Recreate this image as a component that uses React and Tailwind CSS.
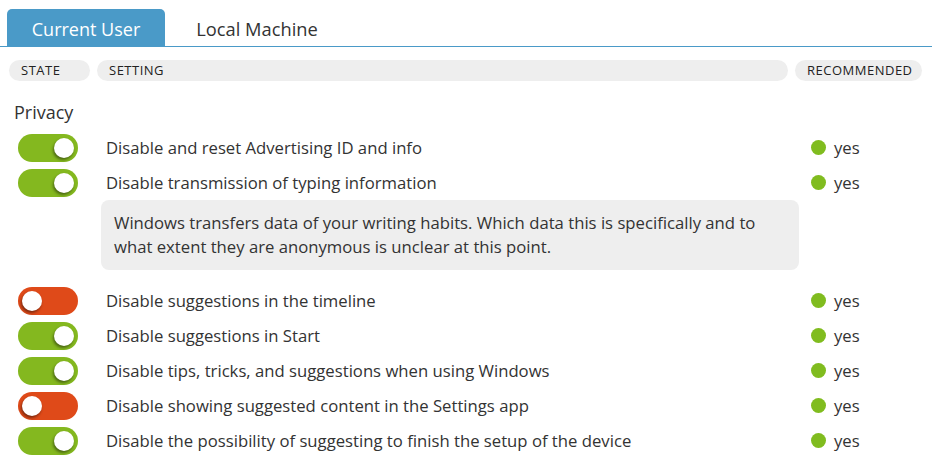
import { useState } from "react"

const font = { fontFamily: '"Open Sans", "Noto Sans", sans-serif' }

const settings = [
  { label: "Disable and reset Advertising ID and info", on: true },
  {
    label: "Disable transmission of typing information",
    on: true,
    info: "Windows transfers data of your writing habits. Which data this is specifically and to what extent they are anonymous is unclear at this point.",
  },
  { label: "Disable suggestions in the timeline", on: false },
  { label: "Disable suggestions in Start", on: true },
  { label: "Disable tips, tricks, and suggestions when using Windows", on: true },
  { label: "Disable showing suggested content in the Settings app", on: false },
  { label: "Disable the possibility of suggesting to finish the setup of the device", on: true },
]

function Toggle({ on, onClick }) {
  return (
    <button
      onClick={onClick}
      className={
        "w-[60px] h-[28px] rounded-full flex items-center px-[4px] " +
        (on ? "bg-[#84b81f] justify-end" : "bg-[#df4a19] justify-start")
      }
    >
      <span className="w-[20px] h-[20px] rounded-full bg-white shadow-[-1px_2px_3px_rgba(0,0,0,0.45)]" />
    </button>
  )
}

export default function App() {
  const [tab, setTab] = useState(0)
  const [states, setStates] = useState(settings.map((s) => s.on))

  const flip = (i) => {
    const next = [...states]
    next[i] = !next[i]
    setStates(next)
  }

  return (
    <div className="w-[932px] h-[457px] bg-white text-[#333] overflow-hidden" style={font}>
      {/* Tabs */}
      <div className="flex pt-[9px] pl-[7px] border-b border-[#4a9ac8]">
        <button
          onClick={() => setTab(0)}
          className={
            "w-[158px] h-[37px] pt-[3px] rounded-t-[5px] text-[18px] " +
            (tab === 0 ? "bg-[#4a9ac8] text-white" : "text-[#333]")
          }
        >
          Current User
        </button>
        <button
          onClick={() => setTab(1)}
          className={
            "w-[184px] h-[37px] pt-[3px] rounded-t-[5px] text-[18.3px] " +
            (tab === 1 ? "bg-[#4a9ac8] text-white" : "text-[#333]")
          }
        >
          Local Machine
        </button>
      </div>

      {/* Column headers */}
      <div className="flex gap-[7px] mt-[13px] pl-[9px] pr-[10px] text-[13px] tracking-[0.5px] text-[#222]">
        <div className="w-[81px] h-[21px] rounded-full bg-[#eeeeee] flex items-center pl-[12px]">STATE</div>
        <div className="flex-1 h-[21px] rounded-full bg-[#eeeeee] flex items-center pl-[12px]">SETTING</div>
        <div className="w-[127px] h-[21px] rounded-full bg-[#eeeeee] flex items-center pl-[12px]">RECOMMENDED</div>
      </div>

      {/* Privacy group */}
      <div className="pl-[14px] mt-[19px] text-[18px] leading-[24px] text-[#333]">Privacy</div>

      <div className="mt-[6px]">
        {settings.map((s, i) => (
          <div key={i}>
            <div className="flex items-center h-[35px]">
              <div className="w-[106px] pl-[18px] flex items-center">
                <Toggle on={states[i]} onClick={() => flip(i)} />
              </div>
              <div className="flex-1 text-[16.7px] text-[#333]">{s.label}</div>
              <div className="w-[121px] flex items-center gap-[8px]">
                <span className="w-[15px] h-[15px] rounded-full bg-[#80bc1f]" />
                <span className="text-[16.7px]">yes</span>
              </div>
            </div>
            {s.info && (
              <div className="ml-[101px] w-[698px] mb-[13px] rounded-[8px] bg-[#eeeeee] px-[13px] py-[11px] text-[16.7px] leading-[24px] text-[#333]">
                {s.info}
              </div>
            )}
          </div>
        ))}
      </div>
    </div>
  )
}
